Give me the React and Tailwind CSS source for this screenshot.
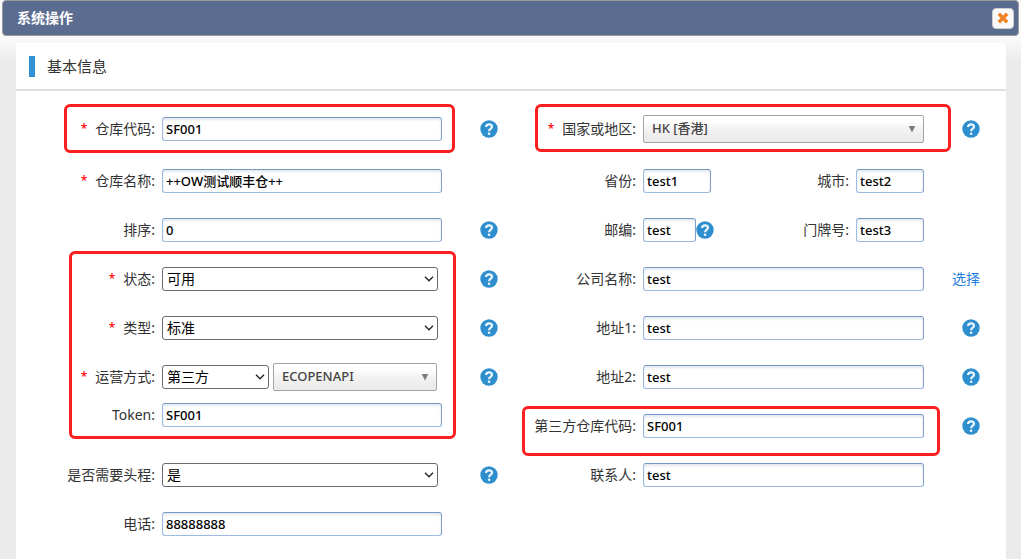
import { useId } from "react"

const inputStyle =
  "h-6 min-w-0 rounded-[3px] border border-[#9dbbe0] border-t-[#7597c3] border-r-[#7f9fc8] bg-white px-[3px] text-[13px] font-medium text-black shadow-[inset_0_2px_3px_#e4e8ee] outline-none"

function HelpButton() {
  return (
    <button type="button" aria-label="帮助" className="block h-[18px] w-[18px] shrink-0">
      <svg viewBox="0 0 18 18" className="h-[18px] w-[18px]">
        <circle cx="9" cy="9" r="8.7" fill="#2f8fce" />
        <path
          d="M6 7C6.200 5.200 7.300 4.300 9 4.300C10.800 4.300 12 5.200 12 6.700C12 8.800 9.100 8.600 9.100 11.300"
          fill="none"
          stroke="#eef7fd"
          strokeWidth="2.200"
        />
        <circle cx="9.100" cy="13.800" r="1.300" fill="#eef7fd" />
      </svg>
    </button>
  )
}

function Label({ id, text, required }) {
  return (
    <label htmlFor={id} className="flex items-center justify-end whitespace-nowrap text-sm text-[#333]">
      {required && <span className="mr-2 text-xs font-medium text-[#f00]">*</span>}
      {text}:
    </label>
  )
}

function Row({ id, label, required, side, height = "h-[49px]", mark, children }) {
  return (
    <div className={`relative grid grid-cols-[138px_minmax(0,1fr)_56px] items-center ${height}`}>
      <Label id={id} text={label} required={required} />
      <div className="flex items-center pl-[7px]">{children}</div>
      <div className="flex justify-end">{side}</div>
      {mark && <Mark place={mark} />}
    </div>
  )
}

function Mark({ place }) {
  return <div className={`pointer-events-none absolute rounded-md border-3 border-[#fb1f1f] ${place}`} />
}

function TextRow({ label, value, help, ...rest }) {
  const id = useId()
  return (
    <Row id={id} label={label} side={help && <HelpButton />} {...rest}>
      <input id={id} type="text" defaultValue={value} className={`w-full ${inputStyle}`} />
    </Row>
  )
}

function Select({ id, value, width }) {
  return (
    <span className={`relative block ${width}`}>
      <select
        id={id}
        className="block h-6 w-full appearance-none rounded-[3px] border border-[#6b6b6b] bg-white pr-5 pl-1 text-sm leading-5 text-black"
      >
        <option>{value}</option>
      </select>
      <svg viewBox="0 0 10 6" className="pointer-events-none absolute top-[9px] right-1 h-1.5 w-2.5">
        <path d="M1 .8 5 4.800 9 .8" fill="none" stroke="#222" strokeWidth="1.300" />
      </svg>
    </span>
  )
}

function ChosenSelect({ id, value, width, ...rest }) {
  return (
    <span className={`relative block ${width}`}>
      <select
        id={id}
        {...rest}
        className="block h-7 w-full appearance-none rounded-[2px] border border-[#a3a3a3] bg-linear-to-b from-white from-20% via-[#f3f3f3] via-50% to-[#e9e9e9] pr-5 pl-2 text-[13px] font-medium text-[#444]"
      >
        <option>{value}</option>
      </select>
      <svg viewBox="0 0 8 7" className="pointer-events-none absolute top-[11px] right-2 h-[7px] w-2">
        <path d="M.7 0h6.600L4 6.500Z" fill="#7b7b7b" />
      </svg>
    </span>
  )
}

function SelectRow({ label, value, ...rest }) {
  const id = useId()
  return (
    <Row id={id} label={label} side={<HelpButton />} {...rest}>
      <Select id={id} value={value} width="mr-1 w-full" />
    </Row>
  )
}

function SmallField({ label, value }) {
  const id = useId()
  return (
    <div className="ml-auto flex items-center gap-[7px]">
      <Label id={id} text={label} />
      <input id={id} type="text" defaultValue={value} className={`w-[68px] ${inputStyle}`} />
    </div>
  )
}

export default function App() {
  return (
    <div className="flex min-h-screen flex-col bg-[#ebebeb] bg-linear-to-b from-[#fbfbfb] from-[36px] to-[#ebebeb] to-[62px] font-['Noto_Sans','Noto_Sans_CJK_SC',sans-serif]">
      <header className="mx-0.5 flex h-9 items-center justify-between rounded border border-[#9a9a9a] bg-[#5b6c91] pr-1 pl-3.5">
        <h1 className="text-sm font-bold text-white">系统操作</h1>
        <button
          type="button"
          aria-label="关闭"
          className="flex h-[21px] w-[22px] items-center justify-center rounded border border-[#ccc] bg-[#f9f9f9]"
        >
          <svg viewBox="0 0 10 10" className="h-3 w-3">
            <path d="M1.500 1.500 8.500 8.500M8.500 1.500 1.500 8.500" stroke="#ef8321" strokeWidth="2.800" />
          </svg>
        </button>
      </header>

      <main className="mr-[15px] ml-4 mt-[7px] flex-1 bg-white">
        <div className="flex h-12 items-center border-b-2 border-[#e0e0e0] pl-[13px]">
          <span className="h-[21px] w-1.5 bg-[#3192d6]" />
          <h2 className="ml-3 text-[15px] text-[#333]">基本信息</h2>
        </div>

        <form className="grid grid-cols-[481fr_482fr] pt-[11px] pr-[26px] pl-px">
          <div>
            <TextRow
              label="仓库代码"
              value="SF001"
              required
              help
              height="h-[54px]"
              mark="top-0.5 right-[43px] bottom-[3px] left-[47px]"
            />
            <TextRow label="仓库名称" value="++OW测试顺丰仓++" required />
            <TextRow label="排序" value="0" help />
            <div className="relative">
              <SelectRow label="状态" value="可用" required />
              <SelectRow label="类型" value="标准" required />
              <Row id="operation" label="运营方式" required side={<HelpButton />}>
                <Select id="operation" value="第三方" width="w-[107px] shrink-0" />
                <ChosenSelect value="ECOPENAPI" width="mr-[5px] ml-1 flex-1" aria-label="第三方服务" />
              </Row>
              <div className="h-[49px] pt-0.5">
                <TextRow label="Token" value="SF001" height="h-6" />
              </div>
              <Mark place="-top-[3px] right-[42px] bottom-[11px] left-[52px]" />
            </div>
            <SelectRow label="是否需要头程" value="是" />
            <TextRow label="电话" value="88888888" />
          </div>

          <div>
            <Row
              id="country"
              label="国家或地区"
              required
              side={<HelpButton />}
              height="h-[54px]"
              mark="top-0.5 right-[29px] bottom-1 left-[37px]"
            >
              <ChosenSelect id="country" value="HK [香港]" width="w-full" />
            </Row>
            <Row id="province" label="省份">
              <input id="province" type="text" defaultValue="test1" className={`w-[68px] ${inputStyle}`} />
              <SmallField label="城市" value="test2" />
            </Row>
            <Row id="zip" label="邮编">
              <input id="zip" type="text" defaultValue="test" className={`w-[53px] ${inputStyle}`} />
              <HelpButton />
              <SmallField label="门牌号" value="test3" />
            </Row>
            <TextRow
              label="公司名称"
              value="test"
              side={
                <a href="#company" className="text-sm text-[#1f7fdc]">
                  选择
                </a>
              }
            />
            <TextRow label="地址1" value="test" help />
            <TextRow label="地址2" value="test" help />
            <TextRow
              label="第三方仓库代码"
              value="SF001"
              help
              mark="top-[5px] right-10 -bottom-1.5 left-6"
            />
            <TextRow label="联系人" value="test" />
          </div>
        </form>
      </main>
    </div>
  )
}
